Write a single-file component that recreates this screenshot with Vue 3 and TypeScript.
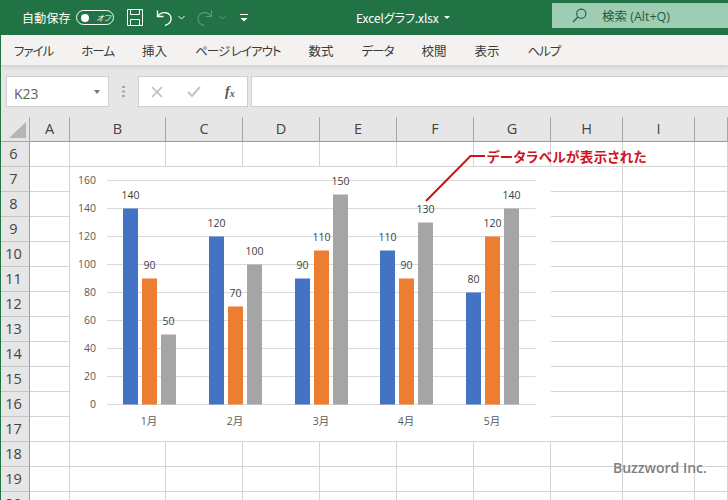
<script setup lang="ts">
const tabs = [
  { label: 'ファイル', kana: true },
  { label: 'ホーム', kana: true },
  { label: '挿入', kana: false },
  { label: 'ページ レイアウト', kana: true },
  { label: '数式', kana: false },
  { label: 'データ', kana: true },
  { label: '校閲', kana: false },
  { label: '表示', kana: false },
  { label: 'ヘルプ', kana: true },
]
const cols = ['A', 'B', 'C', 'D', 'E', 'F', 'G', 'H', 'I', '']
const rows = [6, 7, 8, 9, 10, 11, 12, 13, 14, 15, 16, 17, 18, 19, 20]

const months = [
  { name: '1月', x: 53, vals: [140, 90, 50] },
  { name: '2月', x: 139, vals: [120, 70, 100] },
  { name: '3月', x: 225, vals: [90, 110, 150] },
  { name: '4月', x: 310, vals: [110, 90, 130] },
  { name: '5月', x: 396, vals: [80, 120, 140] },
]
const colors = ['#4472c4', '#ed7d31', '#a5a5a5']
const ticks = [0, 20, 40, 60, 80, 100, 120, 140, 160]
const base = 237
const yOf = (v: number): number => base - v * 1.4
</script>

<template>
  <div class="app">
    <header class="titlebar">
      <span class="autosave">自動保存</span>
      <span class="toggle"><i class="knob"></i><span class="off">オフ</span></span>
      <svg class="ic save" width="16" height="17" viewBox="0 0 16 17" fill="none" stroke="#fff" stroke-width="1">
        <path d="M.5.5h15v16H.5z" />
        <path d="M3.5.5v5h9v-5M3.5 16.5v-6h9v6" />
      </svg>
      <svg class="ic undo" width="17" height="18" viewBox="0 0 17 18" fill="none" stroke="#fff" stroke-width="1.4">
        <path d="M1.5 1.5v6h6" />
        <path d="M1.7 7.3C4 4.3 7 3.2 10 3.8c3.500.8 5.500 3.600 5 6.700-.4 2.600-2.400 4.900-6 6" />
      </svg>
      <svg class="ic caret1" width="7" height="5" viewBox="0 0 7 5" fill="none" stroke="#fff" stroke-width="1"><path d="M.5 1l3 3 3-3" /></svg>
      <svg class="ic redo" width="17" height="18" viewBox="0 0 17 18" fill="none" stroke="#5d9a7a" stroke-width="1.2">
        <path d="M15.500 1.500v6h-6" />
        <path d="M15.300 7.300C13 4.300 10 3.200 7 3.800c-3.500.8-5.500 3.600-5 6.700.4 2.600 2.400 4.900 6 6" />
      </svg>
      <svg class="ic caret2" width="7" height="5" viewBox="0 0 7 5" fill="none" stroke="#5d9a7a" stroke-width="1"><path d="M.5 1l3 3 3-3" /></svg>
      <svg class="ic custom" width="8" height="8" viewBox="0 0 8 8" fill="#fff"><path d="M0 0h8v1H0zM.5 4h7L4 7.500z" /></svg>
      <span class="filename">Excelグラフ.xlsx</span>
      <i class="filecaret"></i>
      <div class="search">
        <svg width="15" height="15" viewBox="0 0 15 15" fill="none" stroke="#1d5f3c" stroke-width="1.100">
          <circle cx="9.300" cy="5.700" r="4.600" />
          <path d="M5.900 9 1 14" />
        </svg>
        <span>検索 (Alt+Q)</span>
      </div>
    </header>

    <nav class="tabs">
      <span v-for="t in tabs" :key="t.label" :class="{ kana: t.kana }">{{ t.label }}</span>
    </nav>

    <section class="formula">
      <div class="namebox">
        <span class="nametext">K23</span>
        <i class="nametri"></i>
      </div>
      <svg class="dots" width="3" height="11" viewBox="0 0 3 11" fill="#a6a6a6">
        <path d="M0 0h3v2H0zM0 4.500h3v2H0zM0 9h3v2H0z" />
      </svg>
      <div class="fxbox">
        <svg width="12" height="12" viewBox="0 0 12 12" fill="none" stroke="#bcbcbc" stroke-width="1.600"><path d="M1 1l10 10M11 1 1 11" /></svg>
        <svg width="14" height="12" viewBox="0 0 14 12" fill="none" stroke="#c4c4c4" stroke-width="2"><path d="M1 6l4 4 8-9" /></svg>
        <span class="fx">f<sub>x</sub></span>
      </div>
      <div class="input"></div>
    </section>

    <section class="sheet">
      <div class="corner"><i></i></div>
      <div v-for="c in cols" :key="'h' + c" class="colhead">{{ c }}</div>
      <template v-for="r in rows" :key="r">
        <div class="rowhead">{{ r }}</div>
        <div v-for="c in cols" :key="r + c" class="cell"></div>
      </template>

      <svg class="chart" width="481" height="274" viewBox="0 0 481 274">
        <line v-for="t in ticks" :key="'g' + t" x1="37" x2="465.500" :y1="yOf(t) + 0.5" :y2="yOf(t) + 0.5" stroke="#d9d9d9" />
        <text v-for="t in ticks" :key="'t' + t" class="axis" x="26" :y="yOf(t) + 4" text-anchor="end">{{ t }}</text>
        <g v-for="m in months" :key="m.name">
          <template v-for="(v, i) in m.vals" :key="i">
            <rect :x="m.x + i * 19" :y="yOf(v) + 0.5" width="15" :height="v * 1.4" :fill="colors[i]" />
            <text class="label" :x="m.x + i * 19 + 7.500" :y="yOf(v) - 9" text-anchor="middle">{{ v }}</text>
          </template>
          <text class="month" :x="m.x + 26" y="258" text-anchor="middle">{{ m.name }}</text>
        </g>
      </svg>

      <svg class="leader" width="62" height="48" viewBox="0 0 62 48" fill="none" stroke="#d0101a" stroke-width="2">
        <path d="M1 47 45.500 2H60" />
      </svg>
      <span class="note">データラベルが表示された</span>
      <span class="mark">Buzzword Inc.</span>
    </section>
  </div>
</template>

<style scoped>
.app {
  width: 728px;
  height: 500px;
  overflow: hidden;
  box-sizing: border-box;
  border-left: 1px solid #217346;
  font-family: "Noto Sans CJK JP", "Noto Sans", sans-serif;
  background: #e6e6e6;
  display: flex;
  flex-direction: column;
}
.titlebar {
  height: 35px;
  flex: none;
  margin-left: -1px;
  background: #217346;
  color: #fff;
  display: flex;
  align-items: center;
  font-size: 12px;
  font-feature-settings: "palt";
}
.autosave { margin-left: 22px; width: 55px; letter-spacing: 0.2px; }
.toggle {
  width: 38px;
  height: 15px;
  box-sizing: border-box;
  border: 1px solid #fff;
  border-radius: 8px;
  display: flex;
  align-items: center;
  padding-left: 4px;
}
.knob { width: 8px; height: 8px; border-radius: 50%; background: #fff; }
.off { font-size: 8px; margin-left: 7px; font-style: italic; }
.ic { flex: none; }
.save { margin-left: 13px; }
.undo { margin-left: 13px; }
.caret1 { margin-left: 5px; }
.redo { margin-left: 11px; }
.caret2 { margin-left: 6px; }
.custom { margin-left: 14px; }
.filename { margin-left: 108px; width: 89px; letter-spacing: -0.1px; }
.filecaret {
  width: 0;
  height: 0;
  border: 3px solid transparent;
  border-top: 3px solid #fff;
  border-bottom: 0;
}
.search {
  margin-left: 102px;
  width: 176px;
  height: 25px;
  margin-top: -5px;
  background: #9fcdb3;
  color: #1d5f3c;
  display: flex;
  align-items: center;
  flex: none;
  padding-left: 20px;
  box-sizing: border-box;
  gap: 15px;
  font-family: "Open Sans", "Noto Sans CJK JP", sans-serif;
  font-size: 12.500px;
}
.tabs {
  height: 30px;
  flex: none;
  background: #f3f2f1;
  box-shadow: 0 2px 4px rgba(0, 0, 0, 0.1);
  display: flex;
  align-items: center;
  padding-left: 13px;
  gap: 28px;
  font-size: 12.500px;
  color: #3a3a3a;
  font-feature-settings: "palt";
  position: relative;
}
.tabs .kana { letter-spacing: -1px; }
.formula {
  height: 52px;
  flex: none;
  display: flex;
  padding-top: 11px;
  padding-left: 5px;
  box-sizing: border-box;
  align-items: flex-start;
}
.namebox {
  width: 103px;
  height: 31px;
  box-sizing: border-box;
  background: #fff;
  border: 1px solid #cfcfcf;
  display: flex;
  align-items: center;
  justify-content: space-between;
  padding: 0 8px 0 7px;
  color: #606060;
  font-size: 14px;
  font-family: "Open Sans", sans-serif;
}
.nametext { padding-top: 3px; }
.nametri {
  width: 0;
  height: 0;
  border: 3.500px solid transparent;
  border-top: 4px solid #777;
  border-bottom: 0;
}
.dots { margin: 10px 13px 0 13px; }
.fxbox {
  width: 110px;
  height: 31px;
  box-sizing: border-box;
  background: #fff;
  border: 1px solid #cfcfcf;
  display: flex;
  align-items: center;
  padding-left: 12px;
  gap: 24px;
  margin-right: 3px;
}
.fx {
  font-family: "Liberation Serif", serif;
  font-style: italic;
  font-weight: 700;
  font-size: 14px;
  color: #555;
  line-height: 1;
}
.fx sub { font-size: 10px; vertical-align: -1px; }
.input {
  flex: 1;
  height: 31px;
  box-sizing: border-box;
  background: #fff;
  border: 1px solid #cfcfcf;
  border-right: 0;
}
.sheet {
  position: relative;
  flex: 1;
  display: grid;
  grid-template-columns: 29px 40px 96px 77px 77px 77px 77px 77px 72px 72px 1fr;
  grid-auto-rows: 25px;
  background: #fff;
  font-family: "Open Sans", sans-serif;
}
.corner {
  background: #e6e6e6;
  border-right: 1px solid #a6a6a6;
  border-bottom: 1px solid #a6a6a6;
  position: relative;
}
.corner i {
  position: absolute;
  left: 8px;
  top: 5px;
  width: 0;
  height: 0;
  border-style: solid;
  border-width: 0 0 16px 17px;
  border-color: transparent transparent #b5b5b5 transparent;
}
.colhead {
  background: #e6e6e6;
  border-right: 1px solid #a6a6a6;
  border-bottom: 1px solid #9c9c9c;
  display: flex;
  align-items: center;
  justify-content: center;
  font-size: 14.500px;
  color: #444;
  padding-bottom: 2px;
  box-sizing: border-box;
}
.rowhead {
  background: #e6e6e6;
  border-right: 1px solid #9c9c9c;
  border-bottom: 1px solid #c4c4c4;
  display: flex;
  align-items: center;
  justify-content: center;
  font-size: 14.500px;
  color: #444;
  padding: 0 3px 2px 0;
  box-sizing: border-box;
}
.cell {
  border-right: 1px solid #d4d4d4;
  border-bottom: 1px solid #d4d4d4;
}
.chart {
  position: absolute;
  left: 69px;
  top: 50px;
  background: #fff;
}
.chart text {
  font-family: "Open Sans", "Noto Sans CJK JP", sans-serif;
  font-size: 10.500px;
}
.chart .label { fill: #404040; }
.chart .axis, .chart .month { fill: #595959; }
.leader {
  position: absolute;
  left: 424px;
  top: 37px;
}
.note {
  position: absolute;
  left: 486px;
  top: 29px;
  color: #d0121b;
  font-size: 13.500px;
  font-weight: 700;
  line-height: 20px;
  letter-spacing: 0.35px;
  font-family: "Noto Sans CJK JP", sans-serif;
  font-feature-settings: "palt";
}
.mark {
  position: absolute;
  left: 612px;
  top: 341px;
  color: #808080;
  font-size: 14px;
  font-weight: 600;
  line-height: 20px;
}
</style>
<style>
html, body { margin: 0; }
</style>
